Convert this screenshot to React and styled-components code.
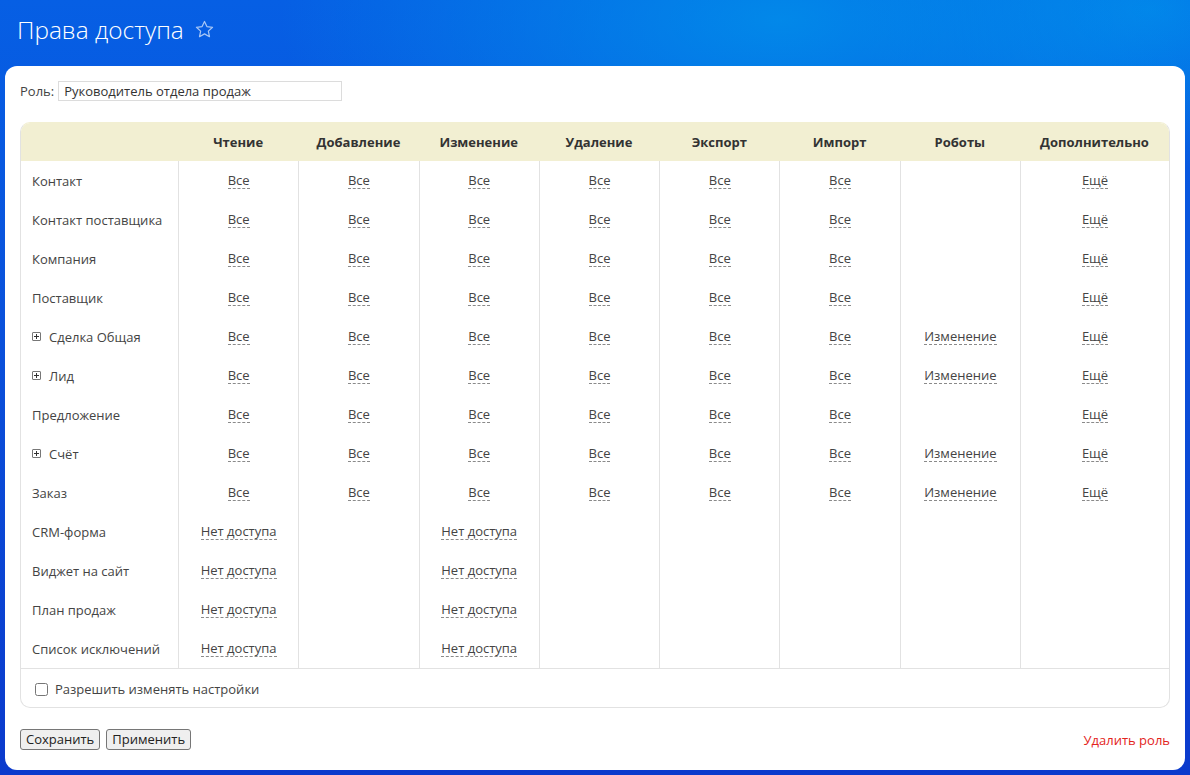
import React from 'react';
import styled, { createGlobalStyle } from 'styled-components';

const columns = ['Чтение', 'Добавление', 'Изменение', 'Удаление', 'Экспорт', 'Импорт', 'Роботы', 'Дополнительно'];

const ALL = ['Все', 'Все', 'Все', 'Все', 'Все', 'Все', '', 'Ещё'];
const ALL_ROBOTS = ['Все', 'Все', 'Все', 'Все', 'Все', 'Все', 'Изменение', 'Ещё'];
const NO_ACCESS = ['Нет доступа', '', 'Нет доступа', '', '', '', '', ''];

const rows = [
    { name: 'Контакт', cells: ALL },
    { name: 'Контакт поставщика', cells: ALL },
    { name: 'Компания', cells: ALL },
    { name: 'Поставщик', cells: ALL },
    { name: 'Сделка Общая', cells: ALL_ROBOTS, expandable: true },
    { name: 'Лид', cells: ALL_ROBOTS, expandable: true },
    { name: 'Предложение', cells: ALL },
    { name: 'Счёт', cells: ALL_ROBOTS, expandable: true },
    { name: 'Заказ', cells: ALL_ROBOTS },
    { name: 'CRM-форма', cells: NO_ACCESS },
    { name: 'Виджет на сайт', cells: NO_ACCESS },
    { name: 'План продаж', cells: NO_ACCESS },
    { name: 'Список исключений', cells: NO_ACCESS },
];

const App = () => {
    return (
        <Page>
            <GlobalStyle />
            <TitleBar>
                <Title>Права доступа</Title>
                <Star viewBox="0 0 24 24">
                    <path d="M12 2.8l2.75 5.9 6.45.75-4.8 4.4 1.3 6.35L12 17l-5.7 3.2 1.3-6.35-4.8-4.4 6.45-.75z" />
                </Star>
            </TitleBar>
            <Panel>
                <RoleRow>
                    <RoleLabel>Роль:</RoleLabel>
                    <RoleInput defaultValue="Руководитель отдела продаж" />
                </RoleRow>
                <Table>
                    <HeadCell />
                    {columns.map((c) => (
                        <HeadCell key={c}>{c}</HeadCell>
                    ))}
                    {rows.map((r) => (
                        <React.Fragment key={r.name}>
                            <NameCell>
                                {r.expandable && <PlusBox />}
                                {r.name}
                            </NameCell>
                            {r.cells.map((v, i) => (
                                <ValueCell key={i}>{v && <DashLink>{v}</DashLink>}</ValueCell>
                            ))}
                        </React.Fragment>
                    ))}
                    <FooterCell>
                        <Check type="checkbox" />
                        Разрешить изменять настройки
                    </FooterCell>
                </Table>
                <Actions>
                    <Button>Сохранить</Button>
                    <Button>Применить</Button>
                    <DeleteLink>Удалить роль</DeleteLink>
                </Actions>
            </Panel>
        </Page>
    );
};

export default App;

const GlobalStyle = createGlobalStyle`
    html, body {
        margin: 0;
        padding: 0;
    }
    body {
        font-family: "Open Sans", "Liberation Sans", sans-serif;
        background: #0a4fdc;
    }
`

const Page = styled.div`
    width: 1190px;
    height: 775px;
    box-sizing: border-box;
    padding: 0 5px 5px 5px;
    display: flex;
    flex-direction: column;
    background:
        radial-gradient(ellipse 500px 220px at 780px 20px, rgba(0, 150, 235, 0.75), rgba(0, 150, 235, 0) 100%),
        radial-gradient(ellipse 300px 160px at 1150px 10px, rgba(0, 140, 235, 0.8), rgba(0, 140, 235, 0) 100%),
        linear-gradient(180deg, #065fe4 0%, #0a52dc 40%, #0b3acc 100%);
    overflow: hidden;
`

const TitleBar = styled.div`
    flex-shrink: 0;
    height: 66px;
    display: flex;
    align-items: center;
    padding-left: 12px;
    gap: 10px;
    box-sizing: border-box;
    padding-bottom: 7px;
`

const Title = styled.h1`
    margin: 0;
    font-size: 24.4px;
    font-weight: 300;
    color: #fff;
`

const Star = styled.svg`
    width: 21px;
    height: 21px;
    fill: none;
    stroke: rgba(255, 255, 255, 0.65);
    stroke-width: 1.4;
    stroke-linejoin: round;
`

const Panel = styled.div`
    flex: 1;
    min-height: 0;
    background: #fff;
    border-radius: 12px;
    padding: 15px;
    display: flex;
    flex-direction: column;
`

const RoleRow = styled.div`
    display: flex;
    align-items: center;
    gap: 4px;
    height: 20px;
    margin-bottom: 21px;
`

const RoleLabel = styled.span`
    font-size: 13px;
    color: #444;
`

const RoleInput = styled.input`
    width: 284px;
    height: 20px;
    box-sizing: border-box;
    border: 1px solid #dcdcdc;
    padding: 0 5px;
    font-family: "Open Sans", "Liberation Sans", sans-serif;
    font-size: 13px;
    color: #333;
    outline: none;
`

const Table = styled.div`
    display: grid;
    grid-template-columns: 157px repeat(7, 1fr) 149px;
    grid-template-rows: 38px;
    grid-auto-rows: 39px;
    border: 1px solid #e2e2e2;
    border-top-color: #f2efd2;
    border-radius: 10px;
    overflow: hidden;
`

const HeadCell = styled.div`
    background: #f2efd2;
    display: flex;
    align-items: center;
    justify-content: center;
    font-size: 13px;
    font-weight: 700;
    color: #333;
`

const NameCell = styled.div`
    display: flex;
    align-items: center;
    gap: 8px;
    padding-left: 11px;
    font-size: 13px;
    color: #444;
    white-space: nowrap;
`

const ValueCell = styled.div`
    display: flex;
    align-items: center;
    justify-content: center;
    border-left: 1px solid #e2e2e2;
`

const DashLink = styled.span`
    font-size: 13px;
    color: #444;
    line-height: 16px;
    border-bottom: 1px dashed #8a8a8a;
    cursor: pointer;
`

const PlusBox = styled.span`
    position: relative;
    width: 9px;
    height: 9px;
    box-sizing: border-box;
    border: 1px solid #777;
    border-radius: 1px;
    &::before, &::after {
        content: '';
        position: absolute;
        background: #333;
    }
    &::before {
        left: 1px;
        top: 3px;
        width: 5px;
        height: 1px;
    }
    &::after {
        left: 3px;
        top: 1px;
        width: 1px;
        height: 5px;
    }
`

const FooterCell = styled.div`
    grid-column: 1 / -1;
    height: 40px;
    border-top: 1px solid #e2e2e2;
    display: flex;
    align-items: center;
    padding-left: 14px;
    font-size: 13px;
    color: #444;
`

const Check = styled.input`
    width: 13px;
    height: 13px;
    margin: 0 7px 0 0;
`

const Actions = styled.div`
    display: flex;
    align-items: center;
    gap: 6px;
    margin-top: 21px;
`

const Button = styled.button`
    height: 21px;
    padding: 0 5px;
    border: 1px solid #767676;
    border-radius: 3px;
    background: #efefef;
    font-family: "Open Sans", "Liberation Sans", sans-serif;
    font-size: 13px;
    color: #222;
    line-height: 19px;
`

const DeleteLink = styled.span`
    margin-left: auto;
    font-size: 13px;
    color: #e3241c;
    cursor: pointer;
`
